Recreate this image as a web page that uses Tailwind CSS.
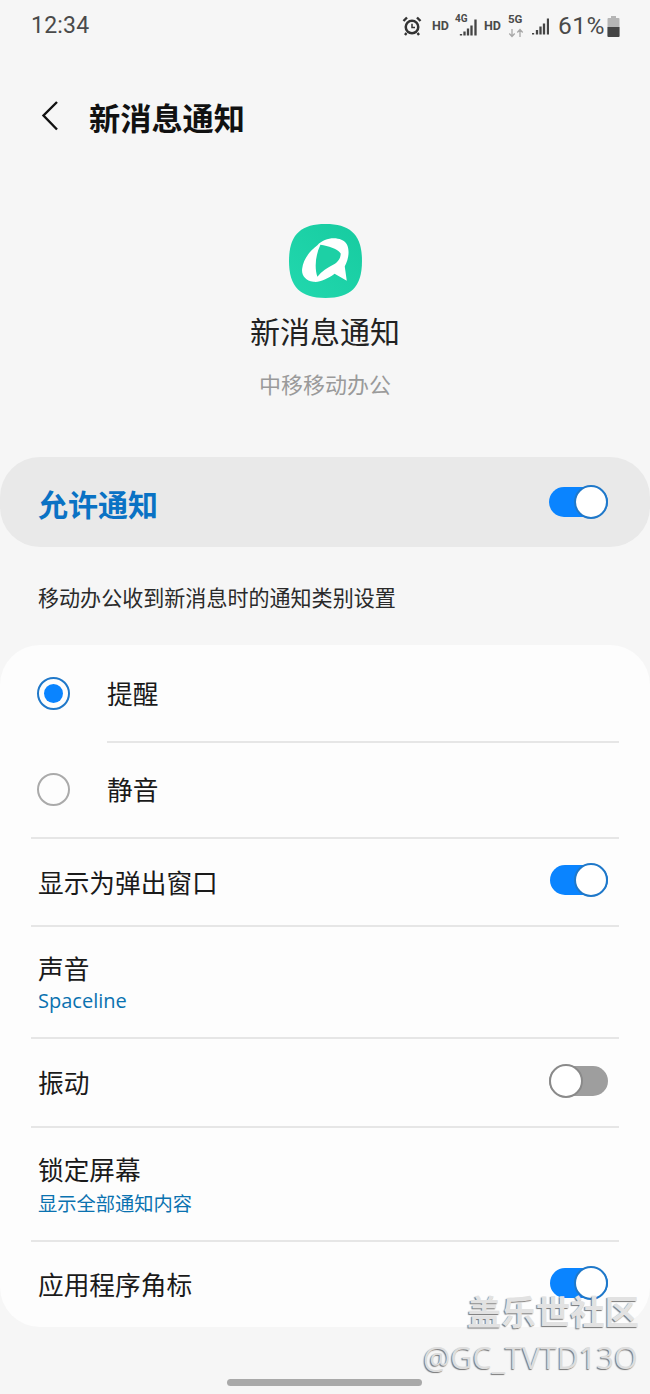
<!DOCTYPE html>
<html lang="zh">
<head>
<meta charset="utf-8">
<script src="https://cdn.jsdelivr.net/npm/@tailwindcss/browser@4"></script>
</head>
<body class="m-0">
<div class="relative w-[650px] h-[1394px] overflow-hidden bg-[#f6f6f6] text-[#1a1a1a] font-['Noto_Sans_CJK_SC','Noto_Sans',sans-serif]">

  <!-- status bar -->
  <div class="h-[52px] pl-[31px] pr-[30px] flex items-center justify-between text-[#4a4a4a]">
    <span class="font-['Roboto',sans-serif] text-[23px] tracking-[0.2px]">12:34</span>
    <div class="flex items-center h-[52px]">
      <svg width="20" height="20" viewBox="0 0 20 20" class="mr-[10px]"><circle cx="10" cy="11" r="7.500" fill="#333"/><circle cx="10" cy="11" r="5" fill="#f6f6f6"/><path d="M10 7.800V11.400H13" stroke="#333" stroke-width="1.500" fill="none"/><path d="M1.500 5 L5 1.500 M18.500 5 L15 1.500 M4.500 17 L3 19 M15.500 17 L17 19" stroke="#333" stroke-width="2.400"/></svg>
      <span class="font-['Roboto',sans-serif] font-bold text-[12.500px] w-[23px]">HD</span>
      <div class="relative w-[22px] h-[24px] mr-[7px]">
        <span class="absolute left-0 -top-[1px] font-['Roboto',sans-serif] font-bold text-[10px] leading-[12px]">4G</span>
        <svg width="22" height="24" viewBox="0 0 22 24" class="absolute inset-0"><path d="M6 21.500v-1.500M9.500 21.500v-4M13 21.500v-7M16.500 21.500v-10M20.500 21.500V5.500" stroke="#444" stroke-width="2.300"/></svg>
      </div>
      <span class="font-['Roboto',sans-serif] font-bold text-[12.500px] w-[24px]">HD</span>
      <div class="relative w-[16px] h-[24px] mr-[8px]">
        <span class="absolute left-0 -top-[1px] font-['Roboto',sans-serif] font-bold text-[11.500px] leading-[13px]">5G</span>
        <svg width="16" height="10" viewBox="0 0 16 10" class="absolute left-0 top-[14px]"><path d="M4 1v7.500M1.300 5.500l2.700 3 2.700-3M12 9V1.500M9.300 4.500l2.700-3 2.700 3" stroke="#a8a8a8" stroke-width="1.300" fill="none"/></svg>
      </div>
      <svg width="17" height="20" viewBox="0 0 17 20" class="mr-[9px]"><path d="M1 18.500v-1.500M5 18.500v-4.500M8.500 18.500v-8M12 18.500v-11M16 18.500V2.500" stroke="#444" stroke-width="2.300"/></svg>
      <span class="font-['Roboto',sans-serif] text-[24.500px] tracking-[0.5px]">61%</span>
      <svg width="13" height="21" viewBox="0 0 13 21" class="ml-[2px]"><path d="M4 0h5v2h2.500a1 1 0 0 1 1 1v17a1 1 0 0 1-1 1h-10a1 1 0 0 1-1-1V3a1 1 0 0 1 1-1H4z" fill="#b5b5b5"/><path d="M0.500 11h12v9a1 1 0 0 1-1 1h-10a1 1 0 0 1-1-1z" fill="#444"/></svg>
    </div>
  </div>

  <!-- header -->
  <div class="h-[132px] flex items-start pt-[47px] pl-[41px]">
    <svg width="18" height="32" viewBox="0 0 18 32" class="mt-[1px]"><path d="M16 2 L2.500 15.500 L16 29.500" stroke="#111" stroke-width="2.400" fill="none"/></svg>
    <h1 class="ml-[30px] -mt-[1px] text-[31.200px] leading-[38px] font-bold text-[#111]">新消息通知</h1>
  </div>

  <!-- app block -->
  <div class="flex flex-col items-center">
    <svg width="73" height="74" viewBox="0 0 72 73" class="mt-[40px]">
      <defs><linearGradient id="g" x1="0" y1="1" x2="1" y2="0"><stop offset="0" stop-color="#22d8ae"/><stop offset="1" stop-color="#17cba0"/></linearGradient></defs>
      <path d="M36 0C61 0 72 11 72 36.500S61 73 36 73 0 62 0 36.500 11 0 36 0Z" fill="url(#g)"/>
      <path d="M28 21C36 12 52 12 57 20C60 26 59 34 55 42L57 56L45 49C38 54 30 58 24 57C16 56 12 50 13 44C14 35 20 27 28 21Z" fill="#fff"/>
      <path d="M31 20.500C39 22 47 24 51 29C51 34 48 38 44 40C38 43 32 47 28 52C25 43 26 31 31 20.500Z" fill="#1dd0a5"/>
    </svg>
    <p class="mt-[10px] text-[30px] leading-[44px] text-[#222]">新消息通知</p>
    <p class="mt-[15px] text-[22px] leading-[32px] text-[#9a9a9a]">中移移动办公</p>
  </div>

  <!-- allow -->
  <div class="mt-[58px] h-[90px] rounded-[40px] bg-[#e9e9e9] pl-[38px] pr-[42px] flex items-center justify-between">
    <span class="mt-[2px] text-[30px] font-bold text-[#0a72c4]">允许通知</span>
    <div class="relative w-[59px] h-[30px] rounded-full bg-[#0a84ff]">
      <span class="absolute right-0 -top-[2px] w-[34px] h-[34px] rounded-full bg-white border-2 border-[#1f78c9]"></span>
    </div>
  </div>

  <p class="mt-[35px] pl-[38px] text-[21.050px] leading-[30px] text-[#2a2a2a]">移动办公收到新消息时的通知类别设置</p>

  <!-- list -->
  <div class="mt-[33px] h-[682px] rounded-[40px] bg-[#fdfdfd] px-[31px] text-[25.700px]">
    <div class="h-[97px] flex items-center relative">
      <span class="w-[33px] h-[33px] ml-[6px] rounded-full border-2 border-[#1f78c9] flex items-center justify-center"><span class="w-[19px] h-[19px] rounded-full bg-[#0a84ff]"></span></span>
      <span class="ml-[37px]">提醒</span>
      <span class="absolute left-[76px] right-0 -bottom-[1px] h-[2px] bg-[#e6e6e6]"></span>
    </div>
    <div class="h-[97px] pb-[1px] flex items-center border-b-2 border-[#e6e6e6]">
      <span class="w-[33px] h-[33px] ml-[6px] rounded-full border-2 border-[#aaaaaa]"></span>
      <span class="ml-[37px]">静音</span>
    </div>
    <div class="h-[88px] flex items-center justify-between pl-[7px] pr-[11px] border-b-2 border-[#e6e6e6]">
      <span>显示为弹出窗口</span>
      <div class="relative w-[58px] h-[30px] -mt-[4px] rounded-full bg-[#0a84ff]"><span class="absolute right-0 -top-[2px] w-[34px] h-[34px] rounded-full bg-white border-2 border-[#1f78c9]"></span></div>
    </div>
    <div class="h-[112px] flex flex-col justify-center pl-[7px] border-b-2 border-[#e6e6e6]">
      <span class="leading-[38px]">声音</span>
      <span class="font-['Open_Sans',sans-serif] text-[20px] leading-[28px] text-[#0a72b0]">Spaceline</span>
    </div>
    <div class="h-[89px] flex items-center justify-between pl-[7px] pr-[11px] border-b-2 border-[#e6e6e6]">
      <span>振动</span>
      <div class="relative w-[59px] h-[30px] -mt-[4px] rounded-full bg-[#9e9e9e]"><span class="absolute left-0 -top-[2px] w-[34px] h-[34px] rounded-full bg-white border-2 border-[#8a8a8a]"></span></div>
    </div>
    <div class="h-[114px] flex flex-col justify-center pl-[7px] border-b-2 border-[#e6e6e6]">
      <span class="leading-[38px]">锁定屏幕</span>
      <span class="text-[19.250px] leading-[30px] text-[#0a72b0]">显示全部通知内容</span>
    </div>
    <div class="h-[85px] flex items-center justify-between pl-[7px] pr-[11px]">
      <span>应用程序角标</span>
      <div class="relative w-[58px] h-[30px] -mt-[4px] rounded-full bg-[#0a84ff]"><span class="absolute right-0 -top-[2px] w-[34px] h-[34px] rounded-full bg-white border-2 border-[#1f78c9]"></span></div>
    </div>
  </div>

  <!-- home bar -->
  <div class="absolute left-[227px] top-[1379px] w-[195px] h-[7px] rounded-full bg-[#a9a9a9]"></div>

  <!-- watermark -->
  <div class="absolute left-[467px] top-[1288px] text-[34.400px] leading-[44px] font-bold text-[#e2e2e2] [text-shadow:-1px_1px_1px_#777] whitespace-nowrap">盖乐世社区</div>
  <div class="absolute left-[423px] top-[1337px] font-['Open_Sans',sans-serif] text-[30.500px] leading-[40px] text-[#dddddd] [text-shadow:-1px_1px_1px_#777] whitespace-nowrap">@GC_TVTD13O</div>
</div>
</body>
</html>
